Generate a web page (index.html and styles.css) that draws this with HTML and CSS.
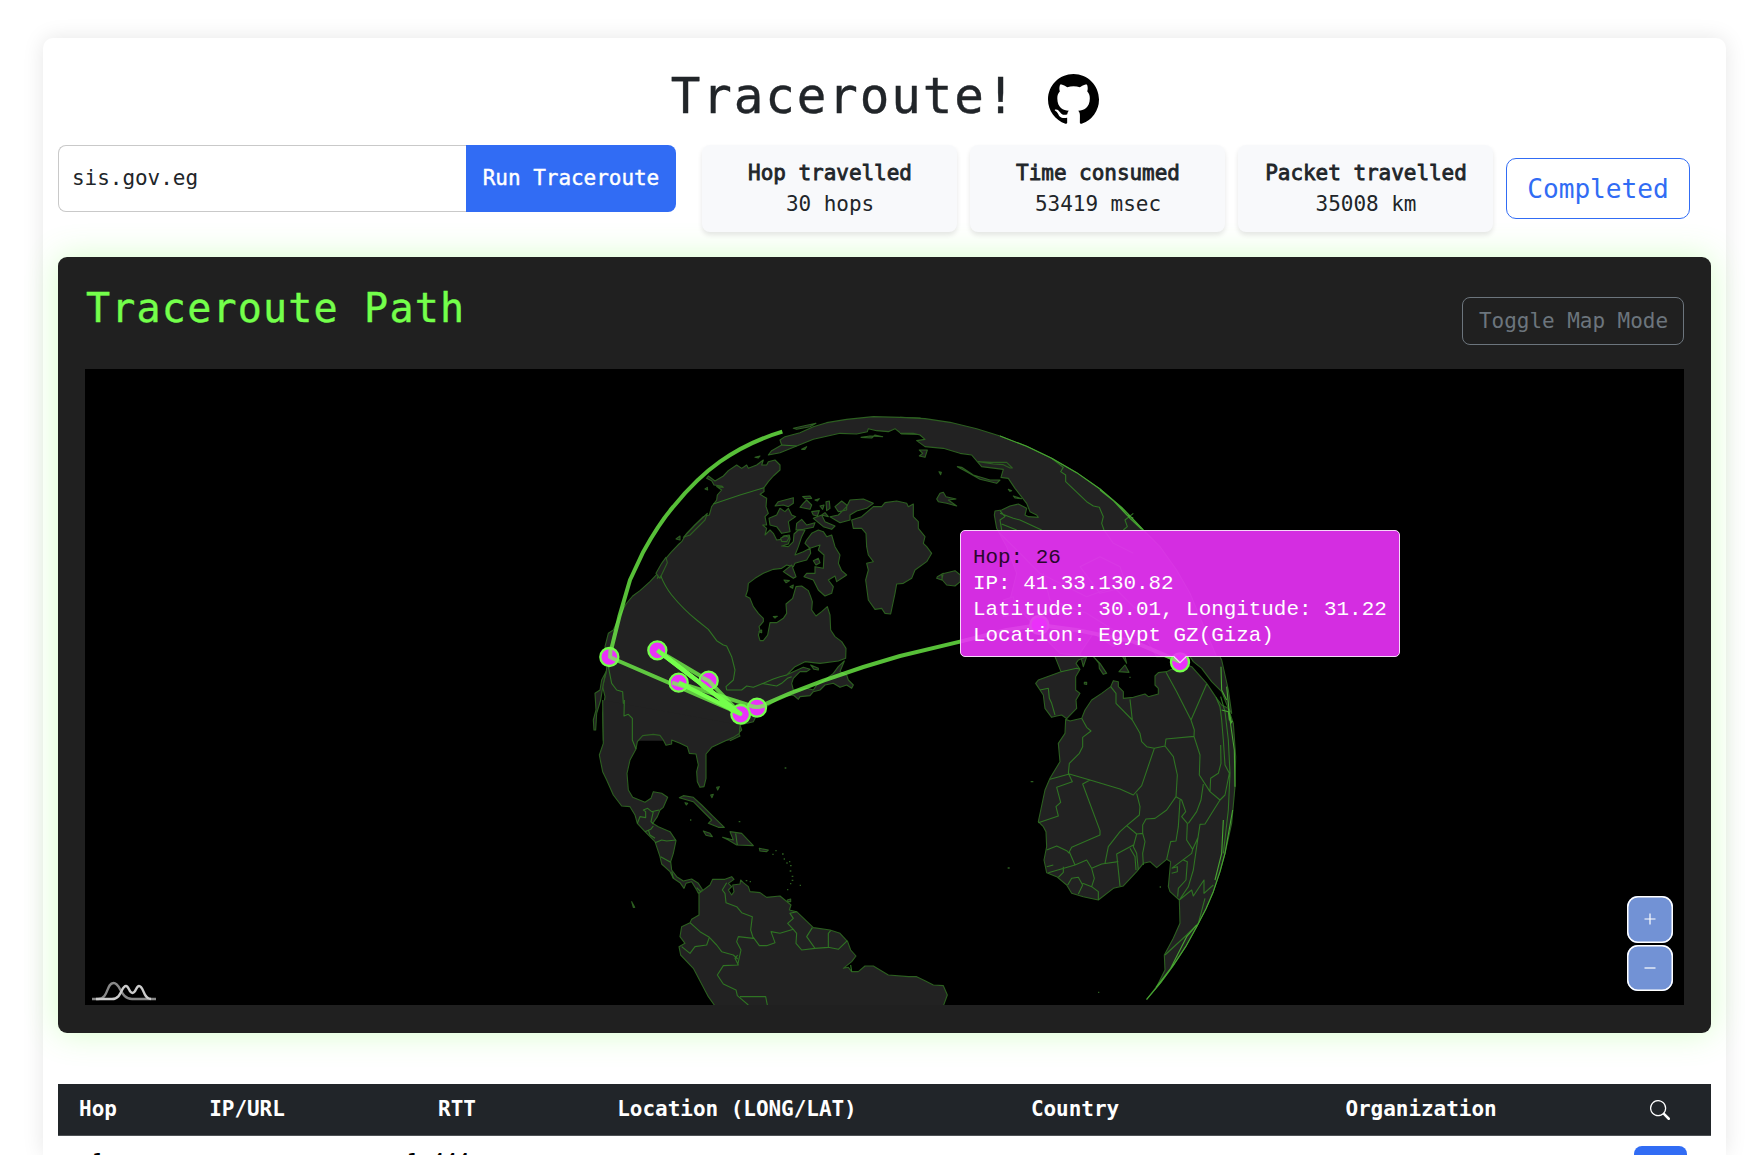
FILE: index.html
```html
<!DOCTYPE html>
<html lang="en">
<head>
<meta charset="utf-8">
<title>Traceroute!</title>
<link rel="stylesheet" href="styles.css">
</head>
<body>
<main class="card">
  <header class="title-row">
    <h1>Traceroute!</h1>
    <svg class="github" viewBox="0 0 16 16" aria-label="GitHub"><path d="M8 0C3.58 0 0 3.58 0 8c0 3.54 2.29 6.53 5.47 7.59.4.07.55-.17.55-.38 0-.19-.01-.82-.01-1.49-2.01.37-2.53-.49-2.69-.94-.09-.23-.48-.94-.82-1.13-.28-.15-.68-.52-.01-.53.63-.01 1.08.58 1.23.82.72 1.21 1.87.87 2.33.66.07-.52.28-.87.51-1.07-1.78-.2-3.64-.89-3.64-3.95 0-.87.31-1.59.82-2.15-.08-.2-.36-1.02.08-2.12 0 0 .67-.21 2.2.82.64-.18 1.32-.27 2-.27s1.36.09 2 .27c1.53-1.04 2.2-.82 2.2-.82.44 1.1.16 1.92.08 2.12.51.56.82 1.27.82 2.15 0 3.07-1.87 3.75-3.65 3.95.29.25.54.73.54 1.48 0 1.07-.01 1.93-.01 2.2 0 .21.15.46.55.38A8.01 8.01 0 0 0 16 8c0-4.42-3.58-8-8-8"/></svg>
  </header>

  <section class="controls">
    <form class="target">
      <input class="host" type="text" value="sis.gov.eg" aria-label="Host">
      <button class="run" type="button">Run Traceroute</button>
    </form>
    <div class="stats">
      <div class="stat"><strong>Hop travelled</strong><span>30 hops</span></div>
      <div class="stat"><strong>Time consumed</strong><span>53419 msec</span></div>
      <div class="stat"><strong>Packet travelled</strong><span>35008 km</span></div>
    </div>
    <div class="status">Completed</div>
  </section>

  <section class="panel">
    <div class="panel-head">
      <h2>Traceroute Path</h2>
      <button class="toggle" type="button">Toggle Map Mode</button>
    </div>
    <div class="map">
      <svg class="globe" viewBox="85 369 1599 636">
        <!-- North America, Greenland and the Arctic -->
        <g class="land" transform="translate(580 400) scale(.33333)">
          <path d="M70 1022 68 940 75 890 68 860 78 820 82 790 75 740 85 700 100 690 118 650 138 612 158 588 180 572 210 545 238 515 232 535 245 520 250 500 255 478 275 455 297 432 305 425 320 400 345 375 370 350 388 345 395 320 410 300 412 285 425 270 410 260 430 262 425 258 402 255 395 242 380 235 385 228 405 243 430 228 445 212 470 195 485 205 500 195 505 205 530 195 550 180 545 195 560 195 565 185 585 180 600 195 600 210 580 228 565 245 552 263 552 275 540 283 560 295 558 320 565 340 555 350 560 375 548 375 560 385 555 405 570 390 580 400 590 420 605 418 610 408 628 405 630 418 625 432 605 438 625 440 640 425 642 402 655 390 675 390 665 410 655 440 645 465 670 455 690 445 692 460 680 480 660 485 645 490 640 500 620 495 605 505 580 508 550 520 525 535 505 550 503 570 497 588 510 595 520 620 535 640 550 655 550 665 537 680 540 690 535 705 540 722 550 722 563 705 570 668 590 668 610 655 620 640 618 612 638 595 648 560 665 558 685 572 692 590 697 605 695 630 708 648 725 635 742 620 750 645 752 690 765 710 785 725 798 745 797 775 775 783 720 790 700 788 675 785 645 800 620 825 640 815 670 802 690 808 680 815 660 815 640 835 635 850 640 870 655 870 680 865 700 870 710 855 735 840 760 820 775 800 793 783 780 815 800 825 805 840 820 855 815 865 800 855 780 862 760 850 735 855 720 870 700 875 690 887 660 890 655 898 640 885 620 888 600 895 575 910 560 920 530 945 520 965 480 975 485 990 475 1000 480 1008 450 1022"/>
          <path d="M78 815 65 840 60 870 45 880 48 930 40 960 42 990 47 990 50 940 62 900 70 850Z"/>
          <path d="M815 360 845 350 880 320 905 320 915 308 950 303 980 310 985 320 1000 312 1000 350 1015 365 1015 385 1035 410 1030 430 1040 440 1055 460 1040 485 1005 510 995 535 970 550 950 552 945 580 932 642 915 640 905 625 885 628 865 600 857 540 865 510 860 490 880 485 865 465 860 440 858 400 845 385 820 385Z"/>
          <path d="M1022 54 960 52 880 50 800 58 740 68 700 80 660 98 615 110 600 120 605 135 575 152 565 165 600 158 650 138 700 118 780 100 830 102 862 95 865 86 890 92 925 95 945 86 965 102 1022 103"/>
          <path d="M640 85 670 78 708 70 690 80 650 88ZM843 112 870 108 908 110 885 105 875 114ZM525 172 540 168 535 174ZM665 148 680 140 675 148Z"/>
          <path d="M585 318 595 305 640 293 640 310 625 320 610 315ZM567 355 590 345 600 325 615 335 625 325 635 345 647 350 625 365 630 395 605 400 590 380 570 375ZM670 310 680 300 695 315 690 328 660 322ZM668 290 690 288 695 295 675 296ZM705 300 718 296 712 303ZM738 305 748 303 750 325 740 332ZM720 318 732 315 728 328ZM695 335 718 332 712 348 700 345ZM650 370 665 358 680 375 705 368 700 382 670 388 648 390ZM700 355 725 345 735 365 765 378 755 388 730 380ZM765 320 785 303 800 315 800 330 775 335ZM750 350 775 345 800 320 810 300 850 297 880 310 860 325 830 333 810 345 810 360 780 368ZM725 345 735 338 745 350Z"/>
          <path d="M680 420 695 400 715 390 730 395 740 410 755 405 765 440 780 465 775 490 785 512 800 525 770 545 765 528 745 540 760 560 755 580 735 588 715 570 700 540 672 530 680 520 705 520 705 500 730 505 732 465 715 450 720 435 690 445 675 430ZM602 415 615 408 628 412 620 425 605 424ZM610 515 635 495 648 530 640 535 625 525ZM700 482 715 475 720 488 708 495ZM612 540 628 542 618 548ZM630 560 640 555 638 565ZM692 795 715 805 715 810 702 808ZM580 650 592 649 585 654ZM537 695 545 690 545 698Z"/>
          <path d="M228 520 245 490 258 472 262 488 240 535ZM310 412 345 375 382 340 375 360 330 405ZM288 417 300 408 300 420ZM375 267 382 262 383 270Z"/>
        </g>
        <g class="borders" transform="translate(580 400) scale(.33333)">
          <path d="M242 527Q255 560 275 585 310 628 350 660L385 688 410 722 430 735 440 738 455 770 465 810 460 840 438 860 440 870 485 870 500 858 520 862 550 850 580 837 600 830 620 825M545 850 590 858 605 850 622 835 635 830M552 263 480 285 400 312M85 800 95 850 110 870 128 875 132 945 145 940 157 955 157 1020M605 135 650 138"/>
        </g>

        <!-- Central and South America -->
        <g class="land" transform="translate(580 700) scale(.33333)">
          <path d="M68 0 70 130 58 165 68 215 80 240 100 285 125 318 150 320 165 345 172 370 195 395 225 425 240 470 245 492 270 515 280 535 300 548 312 565 318 550 335 545 350 570 355 580 368 570 355 550 335 537 310 543 290 530 275 510 272 485 280 460 288 422 270 395 235 380 218 370 232 350 240 330 250 322 263 292 245 280 220 275 213 295 195 307 158 292 145 270 141 220 150 180 168 147 172 125 188 107 220 103 240 106 250 120 258 136 275 132 275 120 300 130 322 140 328 160 348 162 355 195 350 215 352 245 360 262 372 260 378 235 378 162 395 142 430 125 460 112 478 100 480 75"/>
          <path d="M405 918 385 890 340 805 302 765 297 740 315 730 300 710 305 680 330 668 335 658 357 645 357 580 390 555 398 538 435 538 455 530 462 538 445 550 455 560 445 570 455 585 462 575 458 555 480 552 482 540 490 548 505 560 510 575 540 578 560 592 600 588 633 615 628 630 650 635 700 683 750 690 780 700 803 725 812 750 828 768 815 785 790 805 805 802 815 815 835 815 855 798 880 798 925 825 985 830 1010 830 1035 842 1060 855 1090 857 1102 885 1090 918"/>
          <path d="M298 293 310 287 340 292 365 315 400 350 433 382 415 382 385 370 395 360 365 330 340 305ZM370 393 390 400 397 410 378 406ZM428 412 460 420 450 395 485 400 520 437 470 435 445 420ZM538 445 565 450 560 455 540 453ZM315 308 323 310 319 315ZM392 285 400 283 396 293ZM410 262 418 260 413 270ZM155 605 164 622 160 622ZM622 600 632 597 632 605 622 605Z"/>
          <path class="speck" d="M577 463h4M586 452h4M606 462h5M611 477h4M619 489h4M627 485h4M630 497h5M629 513h5M635 529h5M635 541h5M630 551h4M621 569h4M659 556h4M497 542h5M509 545h4M330 360h4M476 365h5M614 204h5"/>
        </g>
        <g class="borders" transform="translate(580 700) scale(.33333)">
          <path d="M133 0 132 48 145 43 157 55 157 120 168 147M172 370 180 350 197 353 197 335 190 330 203 325 215 335 237 330M220 335 213 365 220 372M195 395 212 388 220 378M205 390 210 405 225 415M225 428 245 420 260 423 288 420M242 470 272 487M275 515 280 535M350 563 362 575M330 668 360 695 388 712 410 735 425 755 460 765 473 777M388 712 380 735 345 740 330 760 305 740M473 795 483 750 470 725 475 710 520 715 512 690 517 650 485 638 470 620 438 608 435 580 427 570 440 548M520 712 538 737 560 737 585 728 573 695 600 700 640 688 623 670 640 655 630 640 650 635M640 688 650 700 648 730 665 750 705 745 680 710 697 683M705 745 745 742 745 700 752 692M745 742 775 748 802 722M473 765 465 775 475 795 430 797 412 825 430 852 468 870 472 887 505 915M480 890 557 890 562 915M467 400 472 435M812 795 815 815"/>
        </g>

        <!-- Eurasia -->
        <g class="land" transform="translate(900 400) scale(.33333)">
          <path d="M0 52 75 56 150 67 230 86 300 108 380 139 455 175 530 218 600 267 665 322 730 390 780 440 830 510 870 580 920 700 950 770 770 770 740 720 690 700 640 740 580 700 540 760 550 800 560 770 480 760 440 720 370 640 330 600 350 520 320 440 290 385 283 345 285 333 305 330 330 318 355 312 380 325 375 345 385 350 415 352 410 345 390 335 380 310 345 265 325 235 303 232 310 208 245 200 232 185 215 165 180 160 130 145 75 140 50 122 75 118 60 105 40 100 0 100"/>
          <path d="M172 200 185 202 220 225 270 240 300 240 290 250 240 238 200 215ZM235 185 275 187 320 187 337 204 330 204 310 194 280 192ZM58 150 82 150 75 172 58 168 68 160ZM117 215 124 217 122 224ZM110 297 120 280 130 277 138 290 168 297 145 300 170 318 140 310 115 305ZM112 530 130 520 125 540 110 535ZM125 522 165 512 181 525 181 545 165 558 140 555 127 540ZM325 268 335 272 330 274ZM340 288 365 296 345 294Z"/>
          <path d="M310 650 350 640 340 590 310 600Z"/>
        </g>
        <g class="borders" transform="translate(900 400) scale(.33333)">
          <path d="M455 175 490 202 482 215 497 225 497 245 560 305 580 318 598 322 610 350 605 370 612 390M300 332 315 350 300 360 305 390M300 340 340 355 360 360 425 390M305 372 350 390M700 340 675 360 682 380 670 390M300 400 420 520 560 590 640 560 700 620 760 650M430 520 450 600 560 640 640 690M540 500 600 470 660 500 680 560 600 580ZM612 390 640 430 700 460"/>
          <path class="rim" d="M300 108 380 139 455 175 530 218 600 267 665 322 730 390M600 270 650 310 690 355 725 388M640 302 680 345 700 355"/>
        </g>

        <!-- Iberia, Africa and Arabia -->
        <g class="land" transform="translate(900 640) scale(.33333)">
          <path d="M465 50 483 95 415 120 407 130 420 150 430 165 435 205 455 232 470 228 485 225 500 236 530 205 528 180 540 160 527 150 527 110 540 88 528 70 535 60 560 50"/>
          <path d="M580 50 600 70 620 100 610 103 598 85 597 70 585 55M668 50 680 70 675 50M657 95 675 75 687 97ZM553 127 560 127 560 133 553 132Z"/>
          <path d="M497 238 510 243 545 235 555 210 575 180 605 160 632 140 640 122 655 125 655 140 670 155 670 175 700 172 735 162 745 170 775 162 775 145 765 135 765 108 775 98 800 95 815 88 860 75 875 80 920 130 950 175 965 195 985 205 1000 250 1007 350 1005 440 995 550 975 640 960 695 940 755 918 806 890 860 857 920 820 976 782 1028 740 1078 770 1040 795 990 793 945 820 895 840 850 838 780 810 755 805 740 812 665 800 658 770 683 750 665 730 670 710 695 670 738 640 745 595 780 550 770 515 760 500 735 470 710 440 698 432 660 440 620 438 575 430 560 415 545 435 450 450 415 480 365 475 310 495 280Z"/>
          <path d="M870 50 880 65 905 85 935 125 965 155 985 205 995 220 985 150 965 60 960 50"/>
          <path class="speck" d="M392 425h8M323 684h6M779 741h4M594 1057h4M688 112h4"/>
        </g>
        <g class="borders" transform="translate(900 640) scale(.33333)">
          <path d="M483 95 530 85 540 88M420 150 445 145 448 175 455 190 465 225"/>
          <path d="M545 235 560 262 573 273 548 292 548 320 538 340 508 370 505 400 517 425 470 442 482 487 468 500 475 528 415 548M450 418 508 402 570 420 660 447 700 465 725 437 763 325 740 320 725 305 720 280 697 240 648 190 648 160 632 140M697 240 690 178M570 420 548 432 600 572 600 585 515 622 508 635 525 675M763 325 795 318 798 297 882 289 900 345 898 405 930 455 960 480 935 520 915 552 900 553 890 620 880 690 865 740 838 780M798 97 830 155 873 240 920 132M873 240 883 270 882 289M795 318 820 350 832 405 828 470 800 510 765 535 738 537 728 555 728 580 710 582 680 557 660 575 625 620 615 670M710 460 720 500 718 525 680 557M828 470 845 480 857 515 845 530 862 550 860 600 878 628M840 480 835 560 828 603 812 605 800 658M728 580 735 605 728 640 730 675M710 582 700 620 710 640 715 690M690 625 705 650 708 690M700 615 650 642 655 690 660 738M440 630 470 618 500 632 508 640M525 675 445 698M525 675 560 660 575 685 583 715 575 740 595 755 595 780M575 685 605 672 655 665M503 735 515 715 535 712 548 735 535 762M548 730 575 740M475 712 490 697 490 680M440 680 460 675M910 432 903 480 890 515 865 550M960 480 975 465 988 400 975 375 970 300 965 240 960 200 948 172M930 455 932 415 955 400 963 370 962 315M895 590 878 628 875 640 815 685M850 660 862 665 858 720 835 745 833 770M838 780 875 750 880 768 912 720 912 760 940 735M815 685 832 680 832 695 815 700M795 945 860 885 895 850 915 775M962 170 975 215 985 300 990 400 985 510 970 640"/>
          <path class="rim" d="M980 140 990 240 1003 330 1005 440M998 510 975 640 960 695 940 755 918 806 890 860 857 920 820 976 782 1028 740 1078M985 205 995 250M970 540 965 640 945 720M890 855 860 890 812 985 768 1042M963 80 965 150 980 180M965 210 985 215 988 240 998 245"/>
        </g>

        <!-- Hop routes -->
        <g class="routes" transform="translate(580 400) scale(.33333)">
          <path d="M607 95C540 115 470 150 420 185 370 220 325 265 280 320 250 355 215 410 190 455L150 540 118 650 97 735 88 771 481 941"/>
          <path d="M232 751 386 842 481 941"/>
          <path d="M296 848 531 923 630 880 730 842 850 801 960 768 1140 725 1280 690 1378 675 1490 690 1660 725 1800 785"/>
          <path class="hot" d="M232 751 481 941 296 848"/>
        </g>
        <g class="hops" transform="translate(580 400) scale(.33333)">
          <circle cx="88" cy="771" r="27"/><circle cx="232" cy="751" r="27"/><circle cx="296" cy="848" r="27"/><circle cx="386" cy="842" r="27"/><circle cx="531" cy="923" r="27"/><circle cx="482" cy="943" r="28"/><circle cx="1378" cy="675" r="27"/><circle cx="1800" cy="787" r="27"/>
        </g>
        <g class="routes" transform="translate(580 400) scale(.33333)">
          <path d="M92 745 90 771 110 781M276 848 320 862M366 832 386 842 405 862M508 916Q531 926 554 916M1780 776 1800 785"/>
          <path class="hot" d="M232 751 481 941 450 927M296 848 330 863"/>
        </g>
      </svg>

      <div class="tooltip">
        <div class="tip-hop">Hop: 26</div>
        <div>IP: 41.33.130.82</div>
        <div>Latitude: 30.01, Longitude: 31.22</div>
        <div>Location: Egypt GZ(Giza)</div>
        <svg class="tip-arrow" viewBox="0 0 12 8"><path class="tip-fill" d="M0 0h12L6 6Z"/><path class="tip-line" d="M0 .8 6 6.6 12 .8"/></svg>
      </div>

      <svg class="am-logo" viewBox="0 0 64 20"><path class="am-dim" d="M0 18h6C17 18 14 2 21.500 2S28 18 40 18h24"/><path class="am-lit" d="M4 18h16C30 18 29 5 34 5c3 0 3 7 6.500 7S44 5 47 5c5 0 4 13 12 13"/></svg>

      <div class="zoom">
        <button type="button" aria-label="Zoom in"><svg viewBox="0 0 12 12"><path d="M.5 6h11M6 .5v11"/></svg></button>
        <button type="button" aria-label="Zoom out"><svg viewBox="0 0 12 12"><path d="M.5 6h11"/></svg></button>
      </div>
    </div>
  </section>

  <table class="hops-table">
    <colgroup><col class="c-hop"><col class="c-ip"><col class="c-rtt"><col class="c-loc"><col class="c-country"><col class="c-org"><col class="c-act"></colgroup>
    <thead>
      <tr><th>Hop</th><th>IP/URL</th><th>RTT</th><th>Location (LONG/LAT)</th><th>Country</th><th>Organization</th>
      <th><svg class="search" viewBox="0 0 16 16"><path d="M11.742 10.344a6.500 6.500 0 1 0-1.397 1.398h-.001q.044.060.098.115l3.850 3.850a1 1 0 0 0 1.415-1.414l-3.850-3.850a1 1 0 0 0-.115-.1zM12 6.500a5.500 5.500 0 1 1-11 0 5.500 5.500 0 0 1 11 0"/></svg></th></tr>
    </thead>
    <tbody>
      <tr><td>1</td><td></td><td>1.444 ms</td><td></td><td></td><td></td><td><button class="row-btn" type="button" aria-label="Details"></button></td></tr>
    </tbody>
  </table>
</main>
</body>
</html>
```

FILE: styles.css
```css
* { box-sizing: border-box; }

html, body { height: 100%; }

body {
  margin: 0;
  overflow: hidden;
  background: #fff;
  color: #212529;
  font: 21px/31.5px "DejaVu Sans Mono", monospace;
  letter-spacing: -0.04px;
}

button, input { font: inherit; letter-spacing: inherit; margin: 0; }

h1, h2 { margin: 0; font-weight: 400; }

.card {
  margin: 38px 36px 0 43px;
  height: 1117px;
  overflow: clip;
  overflow-clip-margin: 30px;
  padding: 0 15px;
  border-radius: 10px 10px 0 0;
  box-shadow: 0 0 21px rgba(0, 0, 0, .1);
}

.title-row {
  display: flex;
  justify-content: center;
  align-items: flex-start;
  gap: 31px;
  height: 107px;
  padding-top: 36px;
  padding-left: 1px;
}
h1 {
  margin-top: -3px;
  font-size: 49.2px;
  line-height: 51px;
  letter-spacing: 1.9px;
  -webkit-text-stroke: .4px #212529;
}
.github { width: 51px; height: 51px; }

.controls { display: flex; height: 112px; align-items: flex-start; }

.target { display: flex; width: 618px; height: 67px; }
.host {
  width: 408px;
  padding: 1px 13px 0;
  border: 1px solid #c9c9c9;
  border-right: 0;
  border-radius: 8px 0 0 8px;
  color: #212529;
  background: #fff;
}
.run {
  flex: 1;
  padding: 1px 0 0;
  border: 0;
  border-radius: 0 8px 8px 0;
  background: #316cf4;
  color: #fff;
  -webkit-text-stroke: .4px #fff;
}

.stats { display: flex; gap: 13px; margin-left: 26px; }
.stat {
  display: flex;
  flex-direction: column;
  align-items: center;
  width: 255px;
  height: 87px;
  padding-top: 13px;
  padding-left: 1px;
  border-radius: 8px;
  background: #f8f9fb;
  box-shadow: 0 3px 5px rgba(0, 0, 0, .1);
}
.stat strong { line-height: 31px; font-weight: 400; -webkit-text-stroke: .8px #212529; }

.status {
  width: 184px;
  height: 61px;
  margin: 13px 0 0 13px;
  border: 1px solid #316cf4;
  border-radius: 10px;
  color: #316cf4;
  font-size: 26.200px;
  line-height: 60px;
  text-align: center;
}

.panel {
  height: 776px;
  padding: 0 27px;
  border-radius: 9px;
  background: #202020;
  box-shadow: 0 0 32px rgba(118, 255, 76, .3);
}
.panel-head {
  display: flex;
  justify-content: space-between;
  height: 112px;
}
h2 {
  margin: 27px 0 0 1px;
  color: #74ff4b;
  font-size: 40px;
  line-height: 48px;
  letter-spacing: 1.200px;
  -webkit-text-stroke: .4px #74ff4b;
}
.toggle {
  width: 222px;
  height: 48px;
  margin-top: 40px;
  padding: 2px 0 0 1px;
  border: 1px solid #6c757d;
  border-radius: 8px;
  background: transparent;
  color: #6c757d;
}

.map { position: relative; height: 636px; background: #000; overflow: hidden; }
.globe { display: block; width: 1599px; height: 636px; }
.land { fill: #222; stroke: #2c5f20; stroke-width: 3.300; stroke-linejoin: round; }
.land .speck { stroke-width: 4; fill: none; }
.borders { fill: none; stroke: #2f7423; stroke-width: 3.300; stroke-linejoin: round; }
.borders .rim { stroke: #47a531; }
.routes { fill: none; stroke: #74ff4b; stroke-opacity: .75; stroke-width: 12; stroke-linejoin: round; }
.routes .hot { stroke-opacity: 1; stroke-width: 13; }
.hops { fill: #ea32f9; stroke: #74ff4b; stroke-width: 7; }

.tooltip {
  position: absolute;
  left: 875px;
  top: 161px;
  width: 440px;
  height: 127px;
  padding: 14px 12px 0;
  border: 1px solid #f6d6f8;
  border-radius: 5px;
  background: rgba(234, 50, 248, .905);
  color: #fff;
  font: 20.900px/26px "Liberation Mono", monospace;
  letter-spacing: 0;
  white-space: nowrap;
}
.tip-hop { color: #2a062d; }
.tip-arrow { position: absolute; left: 213px; top: 125px; width: 12px; height: 8px; }
.tip-fill { fill: #ea32f9; }
.tip-line { fill: none; stroke: #f6d6f8; stroke-width: 1.200; }

.am-logo { position: absolute; left: 7px; bottom: 4px; width: 64px; height: 20px; }
.am-logo path { fill: none; stroke-width: 2.400; }
.am-logo .am-dim { stroke: #888; }
.am-logo .am-lit { stroke: #ccc; }

.zoom {
  position: absolute;
  right: 11px;
  bottom: 14px;
  display: flex;
  flex-direction: column;
  gap: 2px;
}
.zoom button {
  display: grid;
  place-items: center;
  width: 46px;
  height: 46.500px;
  padding: 0;
  border: 0;
  border-radius: 11px;
  background: #7292d5;
  box-shadow: inset 0 0 0 1.500px #fff;
}
.zoom svg { width: 12px; height: 12px; }
.zoom path { stroke: #fff; stroke-width: 1.200; }

.hops-table {
  width: 1653px;
  margin-top: 51px;
  table-layout: fixed;
  border-spacing: 0;
  text-align: center;
}
.c-hop { width: 80px; }
.c-ip { width: 218px; }
.c-rtt { width: 202px; }
.c-loc { width: 358px; }
.c-country { width: 318px; }
.c-org { width: 374px; }
.c-act { width: 103px; }
.hops-table th {
  height: 52px;
  padding: 1px 0 0;
  background: #212529;
  border-bottom: 1px solid #4d5154;
  color: #fff;
  font-weight: 700;
}
.search { display: block; width: 20px; height: 20px; margin: 0 auto; fill: #fff; }
.hops-table td { padding: 11px 0; vertical-align: top; color: #000; }
.hops-table td:last-child { padding: 10px 0 0 1px; }
.row-btn {
  display: block;
  width: 53px;
  height: 40px;
  margin: 0 auto;
  border: 0;
  border-radius: 8px;
  background: #316cf4;
}
```
